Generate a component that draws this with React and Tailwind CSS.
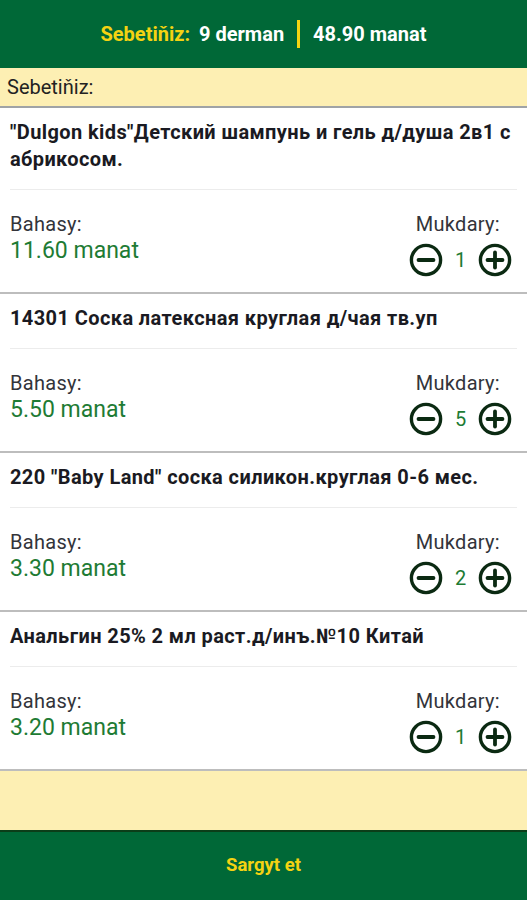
import React from 'react';

const items = [
  { name: '"Dulgon kids"Детский шампунь и гель д/душа 2в1 с абрикосом.', price: '11.60', qty: 1 },
  { name: '14301 Соска латексная круглая д/чая тв.уп', price: '5.50', qty: 5 },
  { name: '220 "Baby Land" соска силикон.круглая 0-6 мес.', price: '3.30', qty: 2 },
  { name: 'Анальгин 25% 2 мл раст.д/инъ.№10 Китай', price: '3.20', qty: 1 },
];

const RoundIcon = ({ plus }) => (
  <svg width="34" height="34" viewBox="0 0 34 34" fill="none">
    <circle cx="17" cy="17" r="14.6" stroke="#0b2a12" strokeWidth="3.4" />
    <path d="M9.5 17h15" stroke="#0b2a12" strokeWidth="3.8" strokeLinecap="round" />
    {plus && <path d="M17 9.5v15" stroke="#0b2a12" strokeWidth="3.8" strokeLinecap="round" />}
  </svg>
);

const CartItem = ({ item }) => (
  <div className="bg-white border-b-2 border-[#bdbdbd]">
    <div className="px-[10px] pt-[11px] pb-[16px] text-[20px] leading-[27px] font-bold tracking-[0.4px] text-[#1a1a22]">
      {item.name}
    </div>
    <div className="mx-[10px] h-px bg-[#ececec]" />
    <div className="flex justify-between pl-[10px] pr-[15px] pt-[22px] pb-[15px]">
      <div>
        <div className="text-[20px] leading-[24px] tracking-[0.3px] text-[#33343a]">Bahasy:</div>
        <div className="text-[23px] leading-[30px] text-[#1e7b34]">{item.price} manat</div>
      </div>
      <div className="flex flex-col items-end">
        <div className="text-[20px] leading-[24px] tracking-[0.3px] text-[#33343a] pr-[12px]">Mukdary:</div>
        <div className="flex items-center gap-[12px] mt-[7px]">
          <RoundIcon />
          <span className="text-[20px] text-[#1e7b34] w-[11px] text-center">{item.qty}</span>
          <RoundIcon plus />
        </div>
      </div>
    </div>
  </div>
);

export default function App() {
  return (
    <div className="w-[527px] h-[900px] flex flex-col bg-[#fdefb3]" style={{ fontFamily: 'Roboto, "Noto Sans", sans-serif' }}>
      <div className="h-[68px] shrink-0 bg-[#006837] flex items-center justify-center text-[20px] font-bold">
        <span className="text-[#f5d312]">Sebetiňiz:</span>
        <span className="text-white ml-[9px]">9 derman</span>
        <span className="w-[3px] h-[28px] bg-[#f5d312] mx-[13px]" />
        <span className="text-white">48.90 manat</span>
      </div>
      <div className="h-[40px] shrink-0 flex items-center px-[7px] text-[20px] text-[#222] border-b-2 border-[#9fa3a6]">
        Sebetiňiz:
      </div>
      <div className="flex-1">
        {items.map((it, i) => (
          <CartItem key={i} item={it} />
        ))}
      </div>
      <div className="h-[70px] shrink-0 bg-[#006837] border-t-2 border-[#0b3d18] flex items-center justify-center text-[18.5px] font-bold text-[#f5d312]">
        Sargyt et
      </div>
    </div>
  );
}
